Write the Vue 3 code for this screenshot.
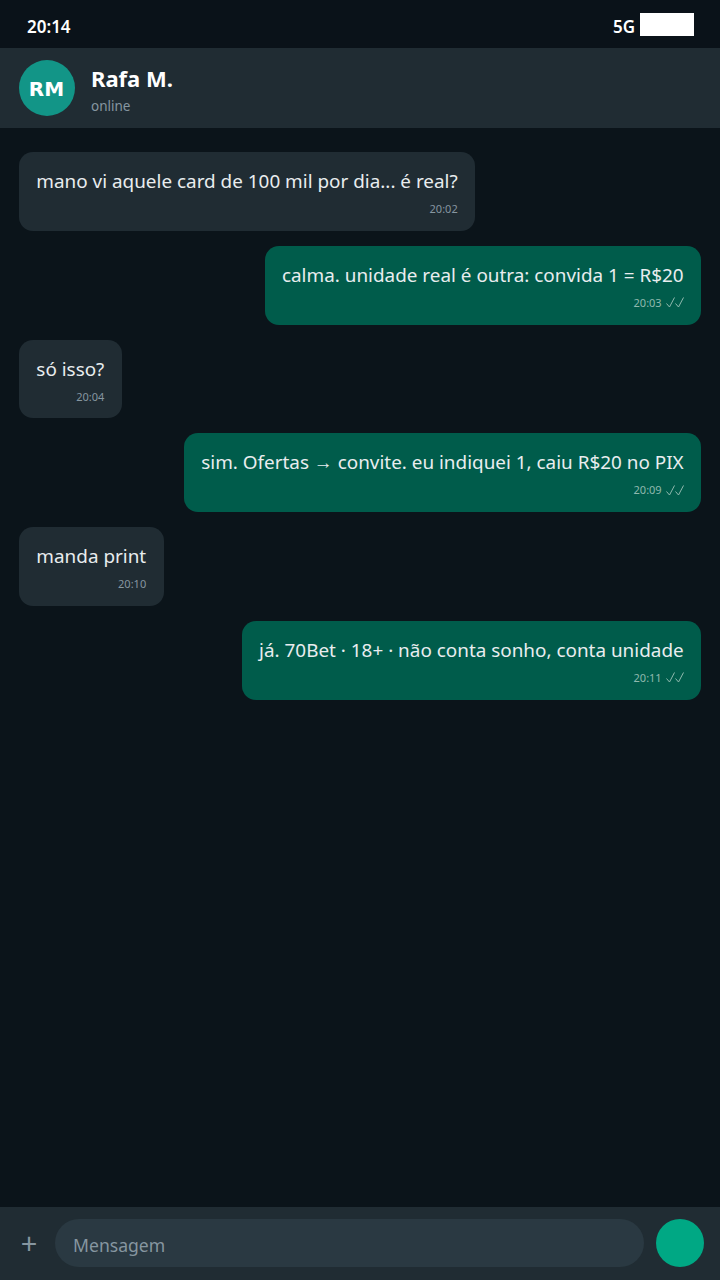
<script setup>
const messages = [
  { id: 1, text: 'mano vi aquele card de 100 mil por dia... é real?', time: '20:02', out: false },
  { id: 2, text: 'calma. unidade real é outra: convida 1 = R$20', time: '20:03', out: true },
  { id: 3, text: 'só isso?', time: '20:04', out: false },
  { id: 4, text: 'sim. Ofertas → convite. eu indiquei 1, caiu R$20 no PIX', time: '20:09', out: true },
  { id: 5, text: 'manda print', time: '20:10', out: false },
  { id: 6, text: 'já. 70Bet · 18+ · não conta sonho, conta unidade', time: '20:11', out: true }
]
</script>

<template>
  <div class="phone">
    <div class="status">
      <span class="clock">20:14</span>
      <div class="status-right">
        <span class="net">5G</span>
        <span class="battery"></span>
      </div>
    </div>

    <header class="head">
      <div class="avatar">RM</div>
      <div class="who">
        <div class="name">Rafa M.</div>
        <div class="presence">online</div>
      </div>
    </header>

    <main class="chat">
      <div v-for="m in messages" :key="m.id" class="bubble" :class="{ out: m.out }">
        <div class="text">{{ m.text }}</div>
        <div class="meta">
          <span>{{ m.time }}</span>
          <svg v-if="m.out" class="ticks" width="18" height="11" viewBox="0 0 18 11" fill="none" stroke="currentColor" stroke-width="1">
            <path d="M0.5 6.5 L3.5 10 L8.5 0.5" />
            <path d="M9.5 6.5 L12.5 10 L17.5 0.5" />
          </svg>
        </div>
      </div>
    </main>

    <footer class="composer">
      <span class="plus">+</span>
      <div class="field">Mensagem</div>
      <div class="send"></div>
    </footer>
  </div>
</template>

<style>
html, body { background: #0b141a; }
</style>

<style scoped>
.phone {
  width: 720px;
  height: 1280px;
  display: flex;
  flex-direction: column;
  background: #0b141a;
  color: #e9edef;
  font-family: "Noto Sans", "Open Sans", sans-serif;
  overflow: hidden;
}

.status {
  height: 48px;
  flex: none;
  display: flex;
  align-items: center;
  justify-content: space-between;
  padding: 0 26px 0 27px;
  background: #0a1219;
  color: #fff;
  font-size: 17px;
  font-weight: 600;
  box-sizing: border-box;
}
.clock,
.net {
  position: relative;
  top: 2px;
}
.status-right {
  display: flex;
  align-items: center;
  gap: 5px;
}
.battery {
  width: 54px;
  height: 23px;
  background: #fff;
}

.head {
  height: 80px;
  flex: none;
  display: flex;
  align-items: center;
  gap: 16px;
  padding: 0 19px;
  background: #202c33;
  box-sizing: border-box;
}
.avatar {
  width: 56px;
  height: 56px;
  border-radius: 50%;
  background: #129587;
  color: #fff;
  font-family: "DejaVu Sans", sans-serif;
  font-weight: 700;
  font-size: 20px;
  display: flex;
  align-items: center;
  justify-content: center;
  padding: 2px 1px 0 0;
  box-sizing: border-box;
}
.who {
  display: flex;
  flex-direction: column;
  gap: 4px;
  padding-top: 4px;
}
.name {
  font-size: 22px;
  font-weight: 700;
  color: #fff;
  line-height: 28px;
}
.presence {
  font-size: 13.5px;
  color: #8696a0;
  line-height: 20px;
}

.chat {
  flex: 1;
  display: flex;
  flex-direction: column;
  align-items: flex-start;
  gap: 15px;
  padding: 24px 19px;
}
.bubble {
  background: #202c33;
  border-radius: 14px;
  padding: 15px 17.33px 13.75px;
  box-sizing: border-box;
}
.bubble.out {
  align-self: flex-end;
  background: #005c4b;
}
.text {
  font-size: 18.9px;
  line-height: 28px;
  white-space: nowrap;
}
.meta {
  height: 16px;
  font-size: 11px;
  line-height: 16px;
  margin-top: 6px;
  color: #8696a0;
  display: flex;
  justify-content: flex-end;
  align-items: center;
  gap: 4px;
}
.out .meta {
  color: #8fb9ae;
}
.ticks {
  flex: none;
}

.composer {
  height: 73.33px;
  flex: none;
  display: flex;
  align-items: center;
  gap: 12px;
  padding: 0 16px 0 19px;
  background: #202c33;
  box-sizing: border-box;
}
.plus {
  width: 22px;
  margin-left: -1px;
  margin-right: 3px;
  text-align: center;
  font-size: 29px;
  line-height: 50px;
  color: #8696a0;
}
.field {
  flex: 1;
  height: 48px;
  border-radius: 24px;
  background: #2a3942;
  color: #8696a0;
  font-size: 17.6px;
  line-height: 52px;
  padding: 0 18px;
  box-sizing: border-box;
}
.send {
  width: 48px;
  height: 48px;
  border-radius: 50%;
  background: #00a884;
}
</style>
